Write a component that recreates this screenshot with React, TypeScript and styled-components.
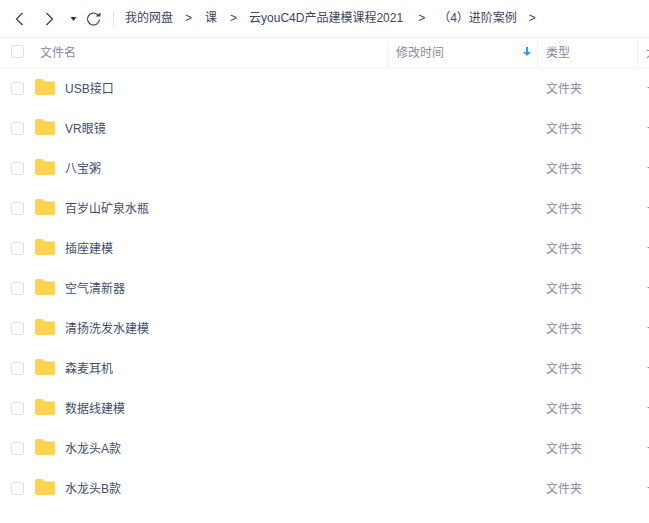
import React from "react";
import styled, { createGlobalStyle } from "styled-components";

const Global = createGlobalStyle`
  html, body { margin: 0; padding: 0; background: #fff; overflow: hidden; }
  body { font-family: "Liberation Sans", "Noto Sans CJK SC", sans-serif; font-size: 12px; color: #424e67; }
`;

const Page = styled.div`
  width: 649px;
  height: 523px;
  overflow: hidden;
  display: flex;
  flex-direction: column;
`;

const Toolbar = styled.div`
  height: 37px;
  display: flex;
  align-items: center;
  border-bottom: 1px solid #f0f0f2;
  flex: none;
`;

const NavIcon = styled.svg<{ $w: number; $ml: number }>`
  width: ${(p) => p.$w}px;
  height: 16px;
  margin-left: ${(p) => p.$ml}px;
  flex: none;
`;

const Divider = styled.div`
  width: 1px;
  height: 17px;
  background: #e4e5e8;
  margin: 0 11px 0 12px;
  flex: none;
`;

const Crumb = styled.span<{ $ml?: number }>`
  font-size: 12px;
  line-height: 16px;
  margin-top: -2px;
  color: #3c465c;
  white-space: nowrap;
  margin-left: ${(p) => p.$ml ?? 0}px;
`;

const Sep = styled.span<{ $ml: number }>`
  font-size: 12px;
  line-height: 16px;
  margin-top: -2px;
  color: #3c465c;
  margin-left: ${(p) => p.$ml}px;
`;

const HeaderRow = styled.div`
  height: 29px;
  display: flex;
  border-bottom: 1px solid #f5f5f6;
  flex: none;
`;

const HeadCell = styled.div<{ $w: number; $border?: boolean }>`
  width: ${(p) => p.$w}px;
  flex: none;
  box-sizing: border-box;
  display: flex;
  align-items: center;
  padding-left: 8px;
  padding-bottom: 2px;
  color: #878c9c;
  font-size: 12px;
  white-space: nowrap;
  overflow: hidden;
  border-right: ${(p) => (p.$border ? "1px solid #f0f0f2" : "none")};
`;

const NameHead = styled(HeadCell)`
  padding-left: 11px;
`;

const TimeHead = styled(HeadCell)`
  justify-content: space-between;
  padding-right: 6px;
`;

const Check = styled.span`
  width: 11px;
  height: 11px;
  border: 1px solid #dfe0e3;
  border-radius: 3px;
  margin-right: 16px;
  flex: none;
`;

const Row = styled.div`
  height: 40px;
  display: flex;
  align-items: center;
  padding-left: 11px;
  flex: none;
`;

const Folder = styled.svg`
  width: 20px;
  height: 16px;
  margin: -2px 10px 0 -5px;
  flex: none;
`;

const Name = styled.span`
  width: 481px;
  flex: none;
  font-size: 12px;
  margin-top: -2px;
  color: #424e67;
  white-space: nowrap;
`;

const TypeCell = styled.span`
  width: 101px;
  flex: none;
  font-size: 12px;
  margin-top: -2px;
  color: #878c9c;
`;

const Dash = styled.span`
  font-size: 12px;
  margin-top: -2px;
  color: #878c9c;
`;

const names = ["USB接口", "VR眼镜", "八宝粥", "百岁山矿泉水瓶", "插座建模", "空气清新器", "清扬洗发水建模", "森麦耳机", "数据线建模", "水龙头A款", "水龙头B款"];

export default function App() {
  return (
    <Page>
      <Global />
      <Toolbar>
        <NavIcon $w={10} $ml={14} viewBox="0 0 10 16">
          <path d="M8.5 2 2.500 8l6 6" fill="none" stroke="#3b4358" strokeWidth="1.3" />
        </NavIcon>
        <NavIcon $w={10} $ml={21} viewBox="0 0 10 16">
          <path d="M1.500 2l6 6-6 6" fill="none" stroke="#3b4358" strokeWidth="1.3" />
        </NavIcon>
        <NavIcon $w={7} $ml={15} viewBox="0 0 7 16">
          <path d="M0.500 6h6L3.500 10z" fill="#2b3245" />
        </NavIcon>
        <NavIcon $w={15} $ml={9} viewBox="0 0 15 16">
          <path d="M11.800 3.800A6 6 0 1 0 13.500 8.500" fill="none" stroke="#3b4358" strokeWidth="1.200" />
          <path d="M9.500 5.500h5V1.500z" fill="#3b4358" />
        </NavIcon>
        <Divider />
        <Crumb>我的网盘</Crumb>
        <Sep $ml={12}>&gt;</Sep>
        <Crumb $ml={13}>课</Crumb>
        <Sep $ml={13}>&gt;</Sep>
        <Crumb $ml={12}>云youC4D产品建模课程2021</Crumb>
        <Sep $ml={15}>&gt;</Sep>
        <Crumb $ml={13}>（4）进阶案例</Crumb>
        <Sep $ml={12}>&gt;</Sep>
      </Toolbar>
      <HeaderRow>
        <NameHead $w={388} $border>
          <Check />
          文件名
        </NameHead>
        <TimeHead $w={150} $border>
          修改时间
          <svg width="8" height="9" viewBox="0 0 8 9">
            <path d="M3 0h2v5h3L4 9 0 5h3z" fill="#2a9df4" />
          </svg>
        </TimeHead>
        <HeadCell $w={100} $border>类型</HeadCell>
        <HeadCell $w={11}>大小</HeadCell>
      </HeaderRow>
      {names.map((n) => (
        <Row key={n}>
          <Check />
          <Folder viewBox="0 0 20 16">
            <path d="M1.500 0h6l2.500 2.500h8.500A1.500 1.500 0 0 1 20 4v10.500a1.500 1.500 0 0 1-1.500 1.500h-17A1.500 1.500 0 0 1 0 14.500v-13A1.500 1.500 0 0 1 1.500 0z" fill="#ffd54f" />
            <path d="M0 3.500h20" stroke="#fcc93f" strokeWidth="0.6" />
          </Folder>
          <Name>{n}</Name>
          <TypeCell>文件夹</TypeCell>
          <Dash>-</Dash>
        </Row>
      ))}
    </Page>
  );
}
